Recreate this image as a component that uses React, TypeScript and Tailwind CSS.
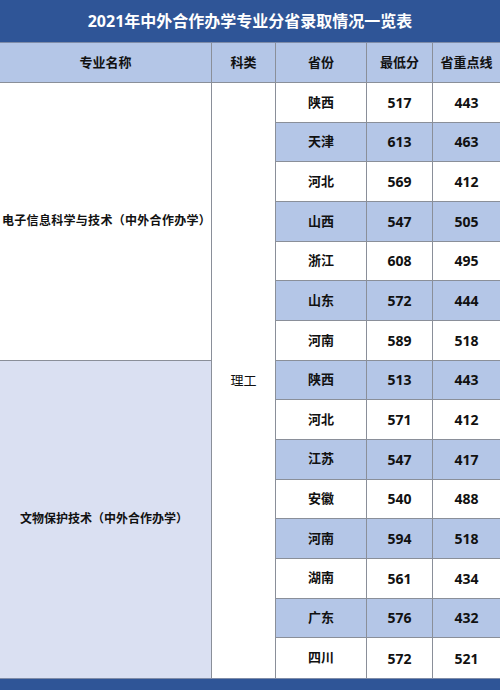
import React from "react";

const rows: [string, string, string][] = [
  ["陕西", "517", "443"],
  ["天津", "613", "463"],
  ["河北", "569", "412"],
  ["山西", "547", "505"],
  ["浙江", "608", "495"],
  ["山东", "572", "444"],
  ["河南", "589", "518"],
  ["陕西", "513", "443"],
  ["河北", "571", "412"],
  ["江苏", "547", "417"],
  ["安徽", "540", "488"],
  ["河南", "594", "518"],
  ["湖南", "561", "434"],
  ["广东", "576", "432"],
  ["四川", "572", "521"],
];

const font = { fontFamily: '"Noto Sans", "Noto Sans CJK SC", sans-serif' };

export default function App() {
  return (
    <div className="w-[500px] h-[690px] bg-white flex flex-col overflow-hidden" style={font}>
      <div className="h-[43px] bg-[#2f5597] flex items-center justify-center text-white font-bold text-[16px] border-b border-[#7f8ca8]">
        2021年中外合作办学专业分省录取情况一览表
      </div>
      <div className="grid grid-cols-[212px_64px_91px_66px_67px] grid-rows-[40px_repeat(15,39.67px)] text-[#111]">
        {["专业名称", "科类", "省份", "最低分", "省重点线"].map((h, i) => (
          <div
            key={h}
            className={`bg-[#b4c6e7] flex items-center justify-center font-bold text-[13px] border-b border-[#8a8f99] ${i < 4 ? "border-r" : ""}`}
          >
            {h}
          </div>
        ))}
        <div className="col-start-1 row-start-2 row-span-7 bg-white flex items-center pl-[2px] whitespace-nowrap font-bold text-[12px] tracking-[0.3px] border-r border-b border-[#8a8f99]">
          电子信息科学与技术（中外合作办学）
        </div>
        <div className="col-start-1 row-start-9 row-span-8 bg-[#dae0f2] flex items-center pl-[20px] whitespace-nowrap font-bold text-[12px] border-r border-[#8a8f99]">
          文物保护技术（中外合作办学）
        </div>
        <div className="col-start-2 row-start-2 row-span-15 bg-white flex items-center justify-center text-[13px] border-r border-[#8a8f99]">
          理工
        </div>
        {rows.map((r, i) => {
          const bg = i % 2 === 1 ? "bg-[#b4c6e7]" : "bg-white";
          const last = i === rows.length - 1;
          const b = last ? "" : "border-b";
          return (
            <React.Fragment key={i}>
              <div className={`col-start-3 ${bg} ${b} border-r border-[#8a8f99] flex items-center justify-center font-bold text-[13px]`}>
                {r[0]}
              </div>
              <div className={`col-start-4 ${bg} ${b} border-r border-[#8a8f99] flex items-center justify-center font-bold text-[14px]`}>
                {r[1]}
              </div>
              <div className={`col-start-5 ${bg} ${b} border-[#8a8f99] flex items-center justify-center font-bold text-[14px]`}>
                {r[2]}
              </div>
            </React.Fragment>
          );
        })}
      </div>
      <div className="flex-1 bg-[#2f5597] border-t border-[#7f8ca8]" />
    </div>
  );
}
